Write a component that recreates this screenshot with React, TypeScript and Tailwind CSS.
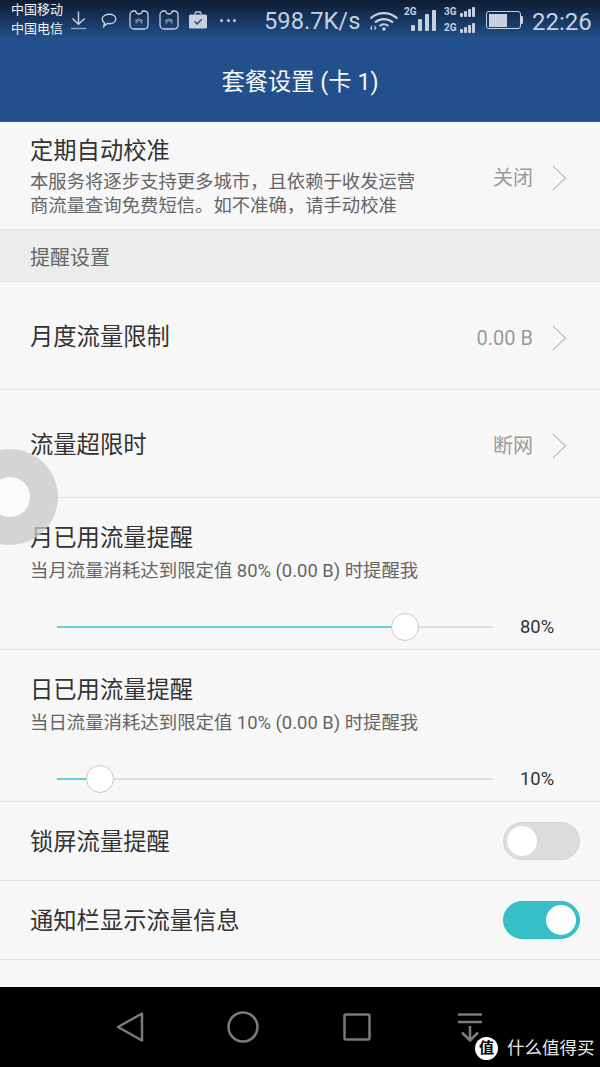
const ICON = "#c6d0df";

// status bar drawings
const DownloadIcon = () => (
  <svg width="17" height="20" viewBox="0 0 18 20" fill="none" stroke={ICON} strokeWidth="1.5" className="shrink-0">
    <path d="M9 1v13M2.5 8.500 9 14.500l6.500-6" />
    <path d="M1 19h16" stroke="#8fa3c2" />
  </svg>
);

const ChatIcon = () => (
  <svg width="16" height="15" viewBox="0 0 16 15" fill="none" stroke={ICON} strokeWidth="1.4" className="ml-[14px] shrink-0">
    <path d="M8.500 1.200c3.400 0 6.300 1.900 6.300 4.800s-2.900 4.700-6.300 4.700c-.8 0-1.500-.1-2.200-.3L2.800 13.400l.7-3.600C2 8.900 1.200 7.500 1.200 6c0-2.900 3.900-4.800 7.300-4.800Z" />
  </svg>
);

const BibIcon = ({ className }: { className: string }) => (
  <svg width="20" height="20" viewBox="0 0 20 20" fill="none" className={`shrink-0 ${className}`}>
    <path d="M5 1h1.500c.6 2 1.800 3 3.500 3s2.900-1 3.500-3H15c2.400 0 4 1.600 4 4v10c0 2.400-1.600 4-4 4H5c-2.400 0-4-1.600-4-4V5c0-2.400 1.600-4 4-4Z" stroke={ICON} strokeWidth="1.300" />
    <path d="M9.400 8.200 9.600 12l-1.500-2.800ZM10.600 8.200 10.400 12l1.500-2.800ZM7.200 9.600 9 12.300l-2.900-1.500ZM12.800 9.600 11 12.300l2.900-1.500ZM6 12.200l3 .5-2 .9ZM14 12.200l-3 .5 2 .9Z" fill={ICON} />
  </svg>
);

const BriefcaseIcon = () => (
  <svg width="18" height="18" viewBox="0 0 18 18" className="ml-[10px] shrink-0">
    <path d="M6 3.500V2.200C6 1.500 6.500 1 7.200 1h3.600c.7 0 1.200.5 1.200 1.200v1.300" fill="none" stroke={ICON} strokeWidth="1.300" />
    <rect y="3.500" width="18" height="14" rx="1.500" fill={ICON} />
    <path d="m5.500 10.500 2.500 2.400 4.600-4.400" fill="none" stroke="#21508c" strokeWidth="1.500" />
  </svg>
);

const WifiIcon = () => (
  <svg width="30" height="22" viewBox="0 0 30 22" fill="none" stroke={ICON} className="shrink-0">
    <path d="M1.500 9.500C9 2.300 20.500 2.300 28.500 9.500" strokeWidth="2.200" />
    <path d="M6 13.500c5-4.500 12.500-4.500 18 0" strokeWidth="2.200" />
    <path d="M10.500 17c2.600-2 6.200-2 9 0" strokeWidth="2" />
    <circle cx="15" cy="20" r="1.800" fill={ICON} stroke="none" />
    <path d="M1 19.500 3 16v5.500ZM7.500 19 5.500 16v5.500Z" fill={ICON} stroke="none" />
  </svg>
);

const Bars = ({ heights, w, gap }: { heights: number[]; w: number; gap: number }) => (
  <div className="flex items-end" style={{ gap }}>
    {heights.map((h, i) => (
      <div key={i} className="rounded-[1px] bg-[#c6d0df]" style={{ width: w, height: h }} />
    ))}
  </div>
);

const Signal2G = () => (
  <div className="relative ml-[5px] h-[26px] w-[32px] shrink-0">
    <span className="absolute left-0 top-0 text-[10px] font-bold leading-none text-[#c6d0df]">2G</span>
    <div className="absolute bottom-[2px] right-0">
      <Bars heights={[6, 12, 17, 21]} w={4} gap={3} />
    </div>
  </div>
);

const SignalDual = () => (
  <div className="ml-[8px] flex h-[26px] w-[31px] shrink-0 flex-col justify-between">
    <div className="flex items-end justify-between">
      <span className="text-[10px] font-bold leading-none text-[#c6d0df]">3G</span>
      <Bars heights={[4, 6, 8, 10]} w={3} gap={1} />
    </div>
    <div className="flex items-end justify-between">
      <span className="text-[10px] font-bold leading-none text-[#c6d0df]">2G</span>
      <Bars heights={[4, 6, 8, 10]} w={3} gap={1} />
    </div>
  </div>
);

const Battery = () => (
  <div className="ml-[11px] flex shrink-0 items-center">
    <div className="h-[18px] w-[35px] rounded-[3px] border-[1.5px] border-[#c6d0df] p-[1.5px]">
      <div className="h-full w-[18px] bg-[#c6d0df]" />
    </div>
    <div className="h-[8px] w-[2px] rounded-r-[1px] bg-[#c6d0df]" />
  </div>
);

const StatusBar = () => (
  <div className="flex h-[40px] items-center pl-[11px]">
    <div className="-mt-[2px] w-[59px] shrink-0 text-[13px] leading-[19px] text-[#f2f5f9]">
      <div>中国移动</div>
      <div>中国电信</div>
    </div>
    <DownloadIcon />
    <ChatIcon />
    <BibIcon className="ml-[12px]" />
    <BibIcon className="ml-[10px]" />
    <BriefcaseIcon />
    <span className="ml-[13px] flex w-[16px] shrink-0 justify-between">
      <i className="size-[3px] rounded-full bg-[#c6d0df]" />
      <i className="size-[3px] rounded-full bg-[#c6d0df]" />
      <i className="size-[3px] rounded-full bg-[#c6d0df]" />
    </span>
    <span className="ml-[28px] mt-[4px] w-[105px] shrink-0 whitespace-nowrap text-[23.7px] leading-none text-[#c6d0df]">598.7K/s</span>
    <WifiIcon />
    <Signal2G />
    <SignalDual />
    <Battery />
    <span className="ml-[9px] mt-[4px] text-[24px] leading-none text-[#c6d0df]">22:26</span>
  </div>
);

const Value = ({ text }: { text: string }) => (
  <div className="mt-[4px] flex items-center">
    <span className="text-[20px] leading-none text-[#9a9a9a]">{text}</span>
    <svg width="15" height="26" viewBox="0 0 15 26" fill="none" stroke="#bcbcbc" strokeWidth="1.100" className="ml-[19px] mr-[1px]">
      <path d="M1 1l12.500 12L1 25" />
    </svg>
  </div>
);

const Row = ({ title, value }: { title: string; value: string }) => (
  <div className="flex h-[108px] items-center justify-between border-b border-[#e3e3e3] pl-[30px] pr-[32px]">
    <span className="mt-[4px] text-[23.3px] leading-none text-[#333333]">{title}</span>
    <Value text={value} />
  </div>
);

const SliderRow = ({ title, desc, percent, thumb }: { title: string; desc: string; percent: string; thumb: number }) => (
  <div className="h-[152px] border-b border-[#e3e3e3] pl-[30px] pr-[46px] pt-[27px]">
    <div className="text-[23.3px] leading-[26px] text-[#333333]">{title}</div>
    <div className="mt-[8px] whitespace-nowrap text-[18.4px] leading-[24px] text-[#666666]">{desc}</div>
    <div className="mt-[29px] flex h-[30px] items-center pl-[27px]">
      <div className="relative flex h-[2px] w-[436px] shrink-0 bg-[#dfdfdf]">
        <div className="h-full bg-[#63d3d9]" style={{ width: thumb }} />
        <div
          className="absolute top-1/2 size-[28px] -translate-x-1/2 -translate-y-1/2 rounded-full border border-[#c9c9c9] bg-white"
          style={{ left: thumb }}
        />
      </div>
      <span className="ml-[27px] text-[18.4px] leading-none text-[#333333]">{percent}</span>
    </div>
  </div>
);

const Toggle = ({ on }: { on: boolean }) => (
  <div
    className={`flex h-[38px] w-[77px] items-center rounded-full border p-[3px] ${
      on ? "justify-end border-[#36bfc6] bg-[#36bfc6]" : "justify-start border-[#d4d4d4] bg-[#dcdcdc]"
    }`}
  >
    <div className="size-[30px] rounded-full bg-white" />
  </div>
);

const ToggleRow = ({ title, on }: { title: string; on: boolean }) => (
  <div className="flex h-[79px] items-center justify-between border-b border-[#e3e3e3] pl-[30px] pr-[20px]">
    <span className="mt-[4px] text-[23.3px] leading-none text-[#333333]">{title}</span>
    <Toggle on={on} />
  </div>
);

export default function App() {
  return (
    <div
      className="relative flex h-[1067px] w-[600px] flex-col overflow-hidden bg-[#f7f7f7]"
      style={{ fontFamily: 'Roboto, "Noto Sans CJK SC", sans-serif' }}
    >
      {/* Header */}
      <div className="h-[122px] shrink-0 border-b border-[#2d5f9f] bg-gradient-to-b from-[#0d1c33] from-0% via-[#21508c] via-[32%] to-[#21508c] text-white">
        <StatusBar />
        <div className="mt-[19px] text-center text-[23.3px] leading-[46px] text-[#f5f7fa]">套餐设置 (卡 1)</div>
      </div>

      {/* Auto calibrate */}
      <div className="flex h-[107px] shrink-0 items-center justify-between pl-[30px] pr-[32px]">
        <div className="mt-[3px] w-[400px]">
          <div className="text-[23.3px] leading-[30px] text-[#333333]">定期自动校准</div>
          <div className="mt-[4px] text-[18.35px] leading-[24px] text-[#666666]">
            <div className="whitespace-nowrap">本服务将逐步支持更多城市，且依赖于收发运营</div>
            <div className="whitespace-nowrap">商流量查询免费短信。如不准确，请手动校准</div>
          </div>
        </div>
        <Value text="关闭" />
      </div>

      {/* Section */}
      <div className="flex h-[53px] shrink-0 items-center border-y border-[#e3e3e3] bg-[#ececec] pl-[30px] pt-[4px] text-[20px] text-[#666666]">
        提醒设置
      </div>

      <Row title="月度流量限制" value="0.00 B" />
      <Row title="流量超限时" value="断网" />
      <SliderRow title="月已用流量提醒" desc="当月流量消耗达到限定值 80% (0.00 B) 时提醒我" percent="80%" thumb={348} />
      <SliderRow title="日已用流量提醒" desc="当日流量消耗达到限定值 10% (0.00 B) 时提醒我" percent="10%" thumb={43} />
      <ToggleRow title="锁屏流量提醒" on={false} />
      <ToggleRow title="通知栏显示流量信息" on={true} />
      <div className="flex-1" />

      {/* Navigation bar */}
      <div className="flex h-[80px] shrink-0 items-center bg-black pl-[116px]">
        <svg width="28" height="32" viewBox="0 0 28 32" fill="none" stroke="#7a7a7a" strokeWidth="2.500" strokeLinejoin="round" className="shrink-0">
          <path d="M26 2.500v27L2 16Z" />
        </svg>
        <svg width="32" height="32" viewBox="0 0 32 32" fill="none" stroke="#7a7a7a" strokeWidth="2.500" className="ml-[83px] shrink-0">
          <circle cx="16" cy="16" r="14.500" />
        </svg>
        <svg width="28" height="28" viewBox="0 0 28 28" fill="none" stroke="#7a7a7a" strokeWidth="2.500" className="ml-[84px] shrink-0">
          <rect x="1.500" y="1.500" width="25" height="25" rx="1.500" />
        </svg>
        <svg width="24" height="29" viewBox="0 0 24 29" fill="none" stroke="#7a7a7a" strokeWidth="2.500" className="ml-[87px] shrink-0">
          <path d="M0 1.500h24M0 9h24M12 13v14M4 19.500l8 8 8-8" />
        </svg>
      </div>

      {/* Floating ball */}
      <div className="absolute left-[-38px] top-[449px] flex size-[96px] items-center justify-center rounded-full bg-[#c8c8c8]/75">
        <div className="size-[40px] rounded-full bg-[#fbfbfb]" />
      </div>

      {/* Watermark */}
      <div className="absolute left-[475px] top-[1037px] flex items-center">
        <div className="flex size-[23px] items-center justify-center rounded-full bg-white text-[15px] font-bold leading-none text-black">值</div>
        <span className="ml-[9px] whitespace-nowrap text-[17.5px] leading-none text-[#e8e8e8]">什么值得买</span>
      </div>
    </div>
  );
}
